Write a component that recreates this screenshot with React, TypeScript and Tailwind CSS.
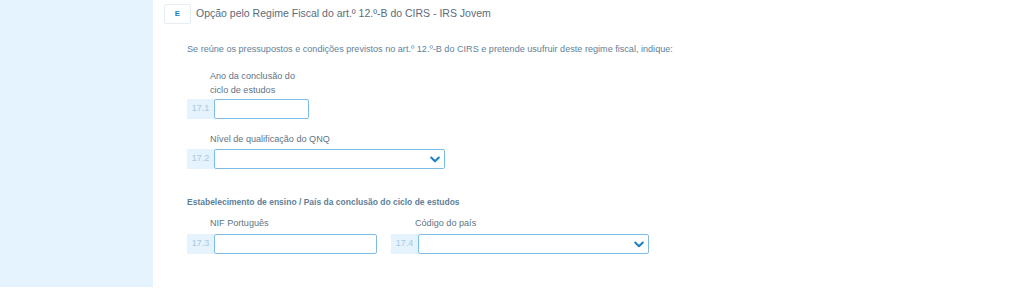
const font = { fontFamily: 'Arial, "Liberation Sans", sans-serif' };

function FieldNumber({ n }: { n: string }) {
  return (
    <div className="flex h-5 w-[27px] items-center justify-center bg-[#e4f3fd] text-[9px] text-[#a9c9e0]">
      {n}
    </div>
  );
}

function TextField({ n, width }: { n: string; width: string }) {
  return (
    <div className="flex items-center">
      <FieldNumber n={n} />
      <div className={`h-5 ${width} rounded-[2px] border border-[#7cbce6] bg-white`} />
    </div>
  );
}

function SelectField({ n, width }: { n: string; width: string }) {
  return (
    <div className="flex items-center">
      <FieldNumber n={n} />
      <div
        className={`flex h-5 ${width} items-center justify-end rounded-[2px] border border-[#7cbce6] bg-white pr-[4px]`}
      >
        <svg width="10" height="7" viewBox="0 0 10 7" fill="none">
          <path d="M1.2 1.5 L5 5.2 L8.8 1.5" stroke="#1b7fc4" strokeWidth="2" strokeLinecap="round" strokeLinejoin="round" />
        </svg>
      </div>
    </div>
  );
}

export default function App() {
  return (
    <div className="flex h-[301px] w-[1024px] bg-white" style={font}>
      {/* Sidebar */}
      <div className="h-[287px] w-[153px] shrink-0 bg-[#e4f3fd]" />

      {/* Section */}
      <div className="flex-1">
        {/* Header */}
        <div className="flex items-center pl-[11px] pt-1">
          <div className="flex h-5 w-[27px] items-center justify-center rounded-[2px] border border-[#e3edf4] text-[8px] font-bold text-[#1b7fc4]">
            E
          </div>
          <span className="ml-[5px] text-[10.5px] text-[#5b6b7b]">
            Opção pelo Regime Fiscal do art.º 12.º-B do CIRS - IRS Jovem
          </span>
        </div>

        <div className="pl-[34px]">
          <p className="mt-[17px] text-[9.1px] leading-4 text-[#5f7f99]">
            Se reúne os pressupostos e condições previstos no art.º 12.º-B do CIRS e pretende usufruir deste regime fiscal, indique:
          </p>

          {/* 17.1 */}
          <div className="mt-[12px] pl-[23px] text-[9.1px] leading-[14px] text-[#5f7384]">
            Ano da conclusão do
            <br />
            ciclo de estudos
          </div>
          <div className="mt-[2px]">
            <TextField n="17.1" width="w-[95px]" />
          </div>

          {/* 17.2 */}
          <div className="mt-[13px] pl-[23px] text-[9.1px] leading-[14px] text-[#5f7384]">
            Nível de qualificação do QNQ
          </div>
          <div className="mt-[3px]">
            <SelectField n="17.2" width="w-[231px]" />
          </div>

          {/* Estabelecimento */}
          <p className="mt-[27px] text-[8.5px] font-bold leading-3 text-[#5f7f99]">
            Estabelecimento de ensino / País da conclusão do ciclo de estudos
          </p>
          <div className="mt-[8px] flex gap-[14px]">
            <div>
              <div className="pl-[23px] text-[9.1px] leading-[14px] text-[#5f7384]">
                NIF Português
              </div>
              <div className="mt-[4px]">
                <TextField n="17.3" width="w-[163px]" />
              </div>
            </div>
            <div>
              <div className="pl-[24px] text-[9.1px] leading-[14px] text-[#5f7384]">
                Código do país
              </div>
              <div className="mt-[4px]">
                <SelectField n="17.4" width="w-[231px]" />
              </div>
            </div>
          </div>
        </div>
      </div>
    </div>
  );
}
